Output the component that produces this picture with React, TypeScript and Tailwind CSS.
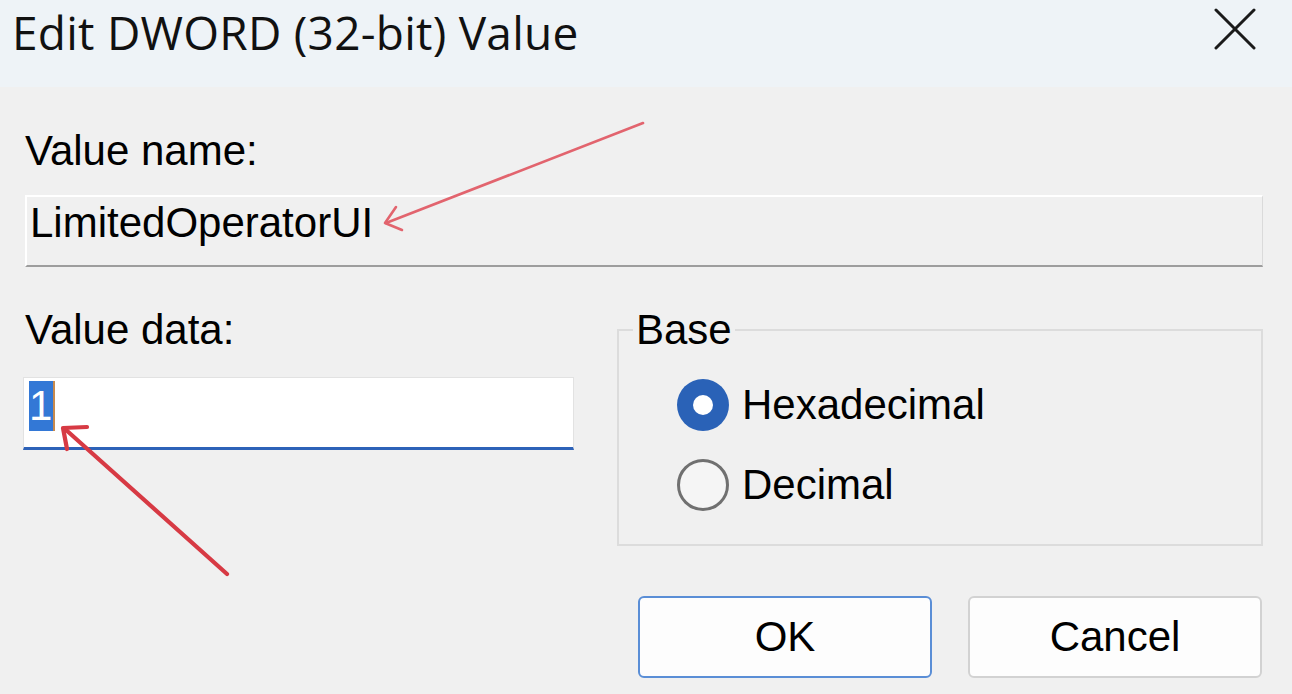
import React from "react";

function Radio({ checked, label }: { checked: boolean; label: string }) {
  return (
    <div className="flex items-center h-[52px]">
      {checked ? (
        <div className="w-[52px] h-[52px] rounded-full bg-[#2a62b7] flex items-center justify-center">
          <div className="w-[20px] h-[20px] rounded-full bg-white" />
        </div>
      ) : (
        <div className="w-[52px] h-[52px] rounded-full border-[3px] border-[#707070] bg-[#f5f5f5]" />
      )}
      <span className="ml-[13px] text-[42px] leading-[42px] text-black">{label}</span>
    </div>
  );
}

export default function App() {
  return (
    <div className="relative w-[1292px] h-[694px] overflow-hidden bg-[#f0f0f0] font-['Liberation_Sans',Arial,sans-serif] text-black">
      {/* Title bar */}
      <div className="h-[87px] bg-[#eef3f7] flex items-start justify-between pl-[12px] pr-[36px]">
        <div className="pt-[7px] text-[46px] leading-[50px] font-['Open_Sans',sans-serif] tracking-[0.25px] text-[#111]">
          Edit DWORD (32-bit) Value
        </div>
        <svg width="42" height="42" viewBox="0 0 42 42" className="mt-[8px]">
          <path d="M2 2 L40 40 M40 2 L2 40" stroke="#1a1a1a" strokeWidth="3" strokeLinecap="round" />
        </svg>
      </div>

      {/* Body */}
      <div className="pl-[23px] pr-[29px]">
        <div className="pt-[43px] pl-[2px] text-[42px] leading-[42px]">Value name:</div>
        <div className="mt-[23px] ml-[2px] h-[72px] border-t-2 border-l-2 border-t-white border-l-white border-b-2 border-b-[#9d9d9d] border-r border-r-[#dadada] bg-[#f0f0f0] pl-[3px] pt-[5px] text-[42px] leading-[42px]">
          LimitedOperatorUI
        </div>

        <div className="mt-[42px] grid grid-cols-[551px_1fr] gap-x-[43px] items-start">
          <div>
            <div className="pl-[2px] text-[42px] leading-[42px]">Value data:</div>
            <div className="mt-[26px] h-[73px] bg-white border-t border-l border-r border-[#e2e2e2] border-b-[3px] border-b-[#2d62b8] pl-[5px] pt-[3px] flex items-start">
              <span className="inline-block h-[50px] w-[24px] bg-[#3378d6] text-white text-[42px] leading-[50px]">1</span>
              <span className="inline-block h-[50px] w-[2px] bg-[#c78a4e]" />
            </div>
          </div>

          <fieldset className="border-2 border-[#dcdcdc] pl-[14px] pr-[14px] pb-[33px]">
            <legend className="px-[3px] text-[42px] leading-[42px]">Base</legend>
            <div className="mt-[28px] ml-[44px] flex flex-col gap-[28px]">
              <Radio checked label="Hexadecimal" />
              <Radio checked={false} label="Decimal" />
            </div>
          </fieldset>
        </div>

        <div className="mt-[50px] flex justify-end gap-[36px] pr-[1px]">
          <button className="w-[294px] h-[82px] rounded-[6px] border-2 border-[#5a8ed6] bg-[#fdfdfd] text-[42px] leading-[42px] text-black font-['Liberation_Sans',Arial,sans-serif]">
            OK
          </button>
          <button className="w-[294px] h-[82px] rounded-[6px] border-2 border-[#d2d2d2] bg-[#fdfdfd] text-[42px] leading-[42px] text-black font-['Liberation_Sans',Arial,sans-serif]">
            Cancel
          </button>
        </div>
      </div>

      {/* Annotation arrows */}
      <svg className="absolute inset-0 pointer-events-none" width="1292" height="694" viewBox="0 0 1292 694">
        <g stroke="#e2646e" strokeWidth="2.6" fill="none" strokeLinecap="round" strokeLinejoin="round">
          <path d="M643 123 L386 223" />
          <path d="M396 207 L385 223 L402 230" />
        </g>
        <g stroke="#d73a44" strokeWidth="4.2" fill="none" strokeLinecap="round" strokeLinejoin="round">
          <path d="M227 574 L65 429" />
          <path d="M87 427 L63 428 L67 449" />
        </g>
      </svg>
    </div>
  );
}
